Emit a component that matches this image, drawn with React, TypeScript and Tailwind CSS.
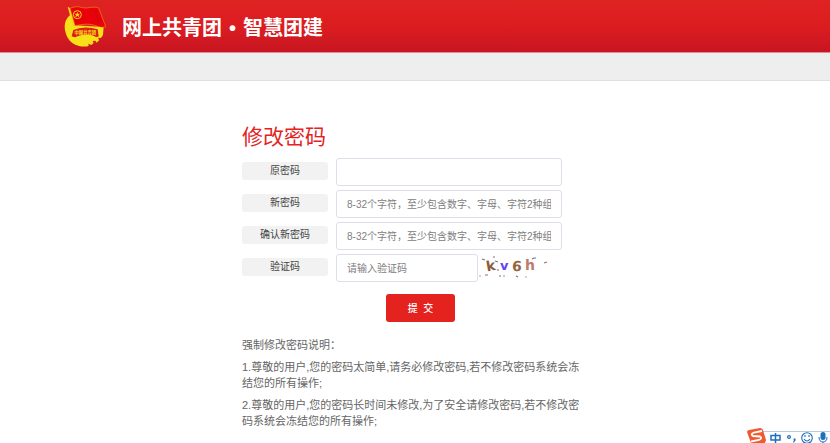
import { useState } from 'react';

interface Field {
  id: string;
  label: string;
  type: string;
  placeholder?: string;
}

const FIELDS: Field[] = [
  { id: 'oldPassword', label: '原密码', type: 'password' },
  {
    id: 'newPassword',
    label: '新密码',
    type: 'password',
    placeholder: '8-32个字符，至少包含数字、字母、字符2种组',
  },
  {
    id: 'confirmPassword',
    label: '确认新密码',
    type: 'password',
    placeholder: '8-32个字符，至少包含数字、字母、字符2种组',
  },
];

const LABEL_CLASS =
  'mt-1 h-[18px] w-[86px] shrink-0 rounded-[3px] bg-[#f2f2f2] text-center text-[10px] leading-[18px] text-[#444]';
const INPUT_CLASS =
  'h-7 rounded-[3px] border border-[#dcdfe9] bg-white px-2.5 text-[10px] text-[#555] outline-none placeholder:text-[#808080]';

function Logo() {
  return (
    <svg viewBox="28 13 126 126" className="h-[42px] w-[42px]" aria-hidden="true">
      <path
        d="M48 42C36 50 30 64 30 78C31 104 44 124 62 132C76 138 90 139 102 136L101 129L110 133L117 127L114 121L123 120L124 126L133 120L131 111L139 112L145 103L147 79L57 74Z"
        fill="#f7e017"
      />
      <path d="M39 18L46 22L62 74L55 77Z" fill="#f3d616" />
      <path
        d="M46 23C58 18 70 16 84 21C100 25 116 15 132 22L153 78C138 84 128 75 112 72C96 68 80 72 61 75Z"
        fill="#e8000b"
        stroke="#f3b517"
        strokeWidth="1.5"
      />
      <path d="M120 27L134 70" stroke="#c9080f" strokeWidth="3" />
      <circle cx="68" cy="42" r="12" fill="none" stroke="#f7d317" strokeWidth="3" />
      <path
        d="M68 33L70 39L77 39L72 43L74 50L68 46L62 50L64 43L59 39L66 39Z"
        fill="#f7d317"
      />
      <path
        d="M56 88Q88 74 129 86L132 107Q124 111 119 106Q92 97 69 107Q60 112 51 107Z"
        fill="#df1a18"
      />
      <text
        x="92"
        y="101"
        textAnchor="middle"
        fontSize="13"
        fontWeight="700"
        fill="#f7e017"
        fontFamily="Noto Sans CJK SC, sans-serif"
      >
        中国共青团
      </text>
    </svg>
  );
}

function Captcha() {
  return (
    <svg
      viewBox="0 0 72 24"
      className="h-6 w-[72px]"
      fontFamily="DejaVu Sans, sans-serif"
      fontWeight="700"
      fontSize="14"
    >
      <text x="8" y="15" fill="#8d5c3a" transform="rotate(-10 12 10)">k</text>
      <text x="22" y="14" fill="#6745ef" fontSize="13">v</text>
      <text x="34" y="15" fill="#94653d" transform="rotate(4 39 10)">6</text>
      <text x="47" y="14" fill="#c07c69">h</text>
      <g strokeWidth="1.2" fill="none">
        <path d="M4 3l3 1M38 20l2 1M17 5l3 1" stroke="#777" />
        <path d="M15 1h2M54 3l2-1M19 14h2" stroke="#8b6a6a" />
        <path d="M56 2h2M21 20h2" stroke="#5d7bb5" />
        <path d="M7 19h3M66 7l3-1" stroke="#a46c55" />
        <path d="M25 20h2" stroke="#86a55b" />
        <path d="M1 20h2M47 21h2" stroke="#aaa" />
      </g>
    </svg>
  );
}

function ImeBar() {
  return (
    <div className="fixed right-0 bottom-0 h-[15px] w-[84px] overflow-hidden">
      <svg viewBox="0 0 84 15" className="h-[15px] w-[84px]">
        <path d="M12 3.5H84V15H12Z" fill="#fff" />
        <path d="M12 3.5H84" stroke="#bccbdc" />
        <path d="M1 4Q1 2.5 3 2L14 0Q16 0 17 2L20 12L19 15H5Z" fill="#ef5a2f" />
        <path
          d="M16 3L8 4.5Q4 6 7 8L14 8.5Q17 10 13 12L5 13.5"
          fill="none"
          stroke="#fff"
          strokeWidth="1.8"
        />
        <path d="M25 7.5H34V12H25ZM29.5 5V16" fill="none" stroke="#1d70bd" strokeWidth="1.5" />
        <circle cx="43" cy="9" r="1.4" fill="none" stroke="#1d70bd" strokeWidth="1.2" />
        <path d="M47.5 10.5h2v2l-1.5 2h-1l.8-2z" fill="#1d70bd" />
        <circle cx="61" cy="10" r="5.3" fill="none" stroke="#1d70bd" strokeWidth="1.1" />
        <path d="M59 7v2M63 7v2M58 11q3 4 6 0" fill="none" stroke="#1d70bd" strokeWidth="1.1" />
        <rect x="74.5" y="4" width="5" height="8" rx="2.5" fill="#1d70bd" />
        <path d="M73 9q0 5 4 5t4-5M77 14v2" fill="none" stroke="#1d70bd" />
      </svg>
    </div>
  );
}

export default function App() {
  const [values, setValues] = useState<Record<string, string>>({});

  const update = (id: string, value: string) =>
    setValues((prev) => ({ ...prev, [id]: value }));

  return (
    <div className="bg-white font-['Liberation_Sans','Noto_Sans_CJK_SC',sans-serif]">
      <header className="flex h-[53px] items-center border-b border-[#e58a8e] bg-linear-to-b from-[#df2222] via-[#dc1d20] to-[#c71522] pl-16">
        <Logo />
        <h1 className="ml-4 flex items-center gap-[7px] pt-1 text-[20px] leading-7 font-bold text-white">
          <span>网上共青团</span>
          <span>•</span>
          <span>智慧团建</span>
        </h1>
      </header>
      <div className="h-7 border-b border-[#e0e0e0] bg-[#eee]" />

      <main className="mx-auto max-w-[354px] pt-10 pl-1">
        <h2 className="text-[21px] leading-8 text-[#e4231f]">修改密码</h2>

        <form onSubmit={(e) => e.preventDefault()}>
          <div className="mt-[5px] flex flex-col gap-1">
            {FIELDS.map((field) => (
              <div key={field.id} className="flex items-start gap-2">
                <label htmlFor={field.id} className={LABEL_CLASS}>
                  {field.label}
                </label>
                <input
                  id={field.id}
                  type={field.type}
                  placeholder={field.placeholder}
                  value={values[field.id] ?? ''}
                  onChange={(e) => update(field.id, e.target.value)}
                  className={`${INPUT_CLASS} w-[226px]`}
                />
              </div>
            ))}

            {/* Captcha */}
            <div className="flex items-start gap-2">
              <label htmlFor="captcha" className={LABEL_CLASS}>
                验证码
              </label>
              <div className="flex items-center">
                <input
                  id="captcha"
                  type="text"
                  placeholder="请输入验证码"
                  value={values.captcha ?? ''}
                  onChange={(e) => update('captcha', e.target.value)}
                  className={`${INPUT_CLASS} w-[142px]`}
                />
                <Captcha />
              </div>
            </div>
          </div>

          <button
            type="submit"
            className="mt-3 ml-36 h-7 w-[69px] rounded-[3px] bg-[#e4231f] text-[10px] font-medium text-white"
          >
            提&nbsp;&nbsp;交
          </button>
        </form>

        <section className="mt-[15px] flex max-w-[345px] flex-col gap-1.5 text-[11px] leading-4 text-[#666]">
          <p>强制修改密码说明：</p>
          <p>1.尊敬的用户,您的密码太简单,请务必修改密码,若不修改密码系统会冻结您的所有操作;</p>
          <p>2.尊敬的用户,您的密码长时间未修改,为了安全请修改密码,若不修改密码系统会冻结您的所有操作;</p>
        </section>
      </main>

      <ImeBar />
    </div>
  );
}
